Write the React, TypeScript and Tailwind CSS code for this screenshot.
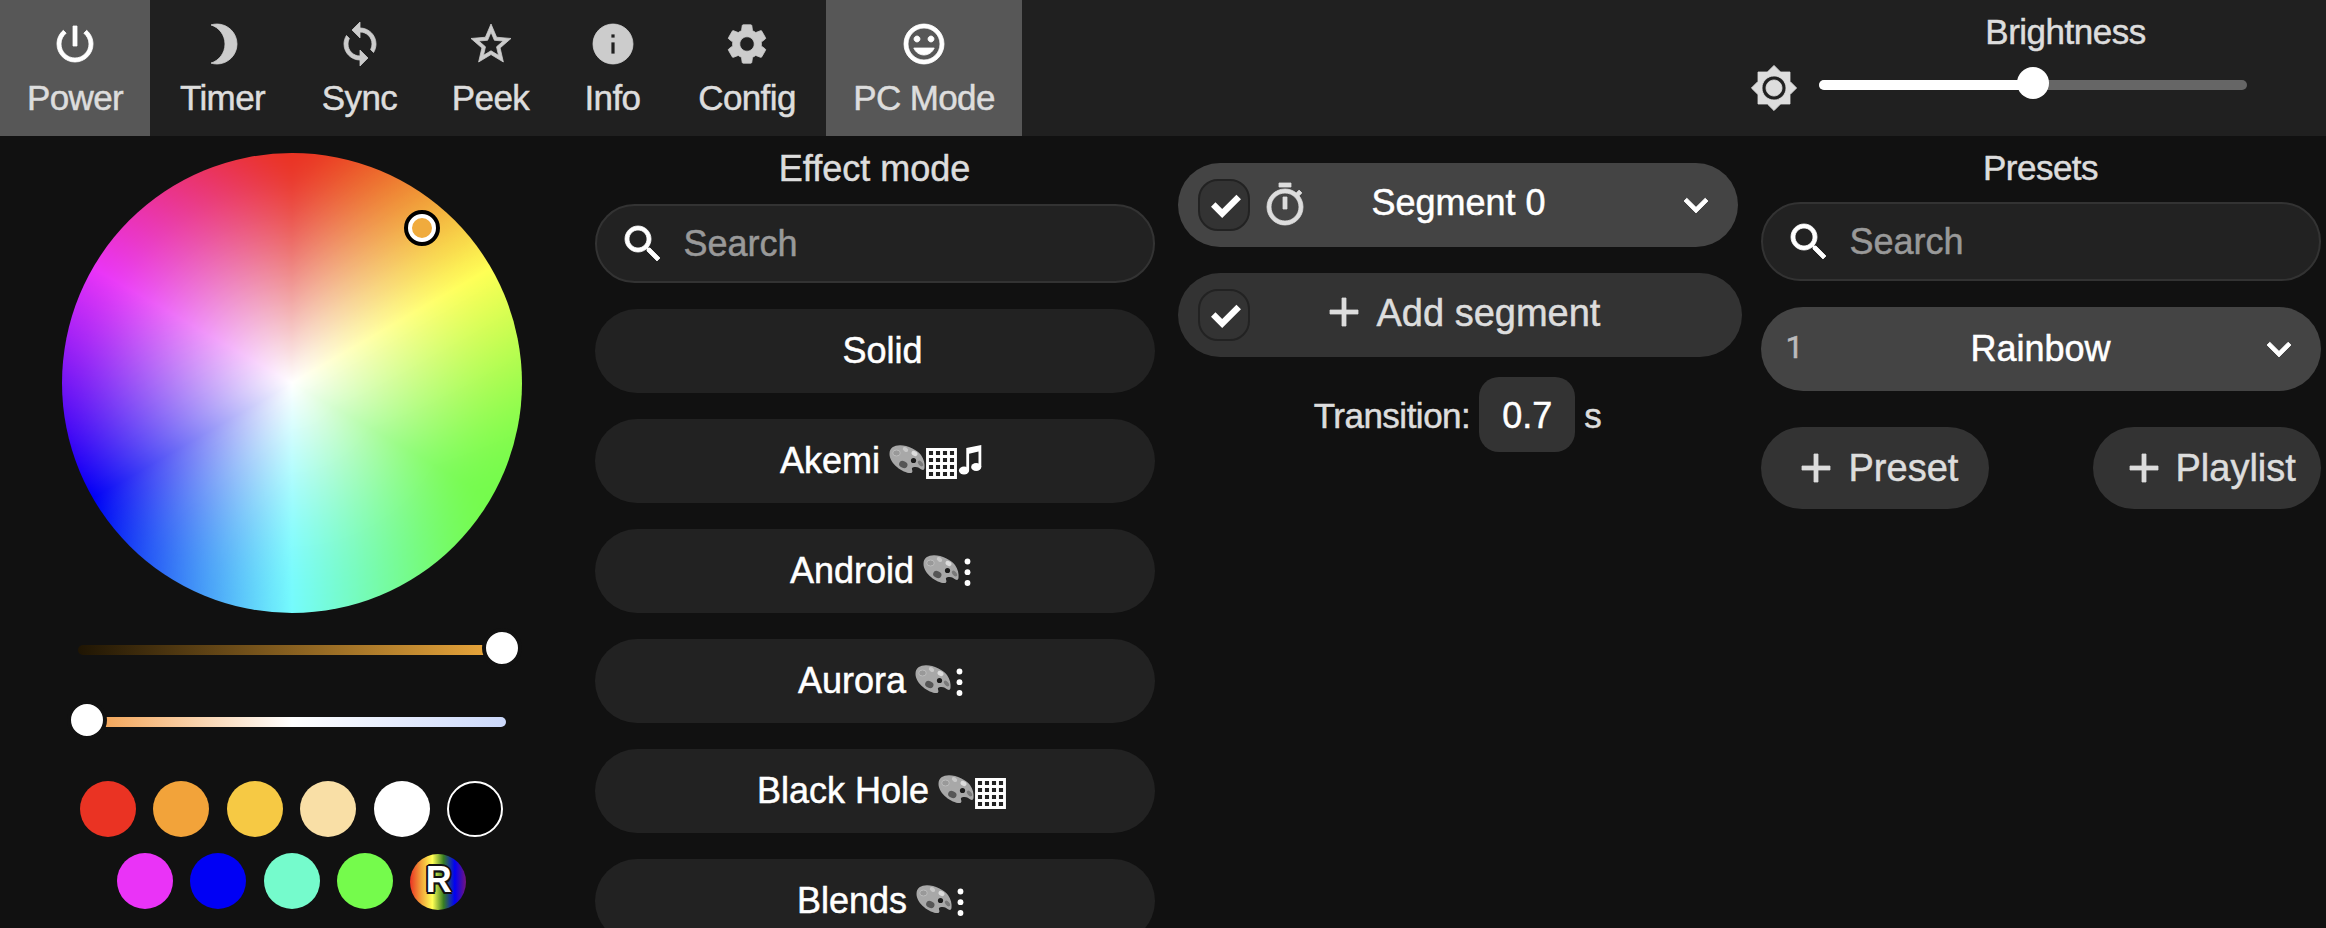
import React from "react";

const PATHS = {
  power:
    "M13 3h-2v10h2V3zm4.83 2.17l-1.42 1.42C17.99 7.86 19 9.81 19 12c0 3.87-3.13 7-7 7s-7-3.13-7-7c0-2.19 1.01-4.14 2.58-5.42L6.17 5.17C4.23 6.82 3 9.26 3 12c0 4.97 4.03 9 9 9s9-4.03 9-9c0-2.74-1.23-5.18-3.17-6.83z",
  moon: "M9 2c-1.05 0-2.05.16-3 .46 4.06 1.27 7 5.06 7 9.54 0 4.48-2.94 8.27-7 9.54.95.3 1.95.46 3 .46 5.52 0 10-4.48 10-10S14.52 2 9 2z",
  sync: "M12 4V1L8 5l4 4V6c3.31 0 6 2.69 6 6 0 1.01-.25 1.97-.7 2.8l1.46 1.46C19.54 15.03 20 13.57 20 12c0-4.42-3.58-8-8-8zm0 14c-3.31 0-6-2.69-6-6 0-1.01.25-1.97.7-2.8L5.24 7.74C4.46 8.97 4 10.43 4 12c0 4.42 3.58 8 8 8v3l4-4-4-4v3z",
  star: "M22 9.24l-7.19-.62L12 2 9.19 8.63 2 9.24l5.46 4.73L5.82 21 12 17.27 18.18 21l-1.63-7.03L22 9.24zM12 15.4l-3.76 2.27 1-4.28-3.32-2.88 4.38-.38L12 6.1l1.71 4.04 4.38.38-3.32 2.88 1 4.28L12 15.4z",
  info: "M12 2C6.48 2 2 6.48 2 12s4.48 10 10 10 10-4.48 10-10S17.52 2 12 2zm1 15h-2v-6h2v6zm0-8h-2V7h2v2z",
  cog: "M19.14 12.94c.04-.3.06-.61.06-.94 0-.32-.02-.64-.07-.94l2.03-1.58c.18-.14.23-.41.12-.61l-1.92-3.32c-.12-.22-.37-.29-.59-.22l-2.39.96c-.5-.38-1.03-.7-1.62-.94l-.36-2.54c-.04-.24-.24-.41-.48-.41h-3.84c-.24 0-.43.17-.47.41l-.36 2.54c-.59.24-1.13.57-1.62.94l-2.39-.96c-.22-.08-.47 0-.59.22L2.74 8.87c-.12.21-.08.47.12.61l2.03 1.58c-.05.3-.09.63-.09.94s.02.64.07.94l-2.03 1.58c-.18.14-.23.41-.12.61l1.92 3.32c.12.22.37.29.59.22l2.39-.96c.5.38 1.03.7 1.62.94l.36 2.54c.05.24.24.41.48.41h3.84c.24 0 .44-.17.47-.41l.36-2.54c.59-.24 1.13-.56 1.62-.94l2.39.96c.22.08.47 0 .59-.22l1.92-3.32c.12-.22.07-.47-.12-.61l-2.01-1.58zM12 15.6c-1.98 0-3.6-1.62-3.6-3.6s1.62-3.6 3.6-3.6 3.6 1.62 3.6 3.6-1.62 3.6-3.6 3.6z",
  smile:
    "M11.99 2C6.47 2 2 6.48 2 12s4.47 10 9.99 10C17.52 22 22 17.52 22 12S17.52 2 11.99 2zM12 20c-4.42 0-8-3.58-8-8s3.58-8 8-8 8 3.58 8 8-3.58 8-8 8zm3.5-9c.83 0 1.5-.67 1.5-1.5S16.33 8 15.5 8 14 8.67 14 9.5s.67 1.5 1.5 1.5zm-7 0c.83 0 1.5-.67 1.5-1.5S9.33 8 8.5 8 7 8.67 7 9.5 7.67 11 8.5 11zm3.5 6.5c2.33 0 4.31-1.46 5.11-3.5H6.89c.8 2.04 2.78 3.5 5.11 3.5z",
  sun: "M20 8.69V4h-4.69L12 .69 8.69 4H4v4.69L.69 12 4 15.31V20h4.69L12 23.31 15.31 20H20v-4.69L23.31 12 20 8.69zM12 18c-3.31 0-6-2.69-6-6s2.69-6 6-6 6 2.69 6 6-2.69 6-6 6zm0-10c-2.21 0-4 1.79-4 4s1.79 4 4 4 4-1.79 4-4-1.79-4-4-4z",
  search:
    "M15.5 14h-.79l-.28-.27C15.41 12.59 16 11.11 16 9.5 16 5.91 13.09 3 9.5 3S3 5.91 3 9.5 5.91 16 9.5 16c1.61 0 3.09-.59 4.23-1.57l.27.28v.79l5 4.99L20.49 19l-4.99-5zm-6 0C7.01 14 5 11.99 5 9.5S7.01 5 9.5 5 14 7.01 14 9.5 11.99 14 9.5 14z",
  timer:
    "M15 1H9v2h6V1zm-4 13h2V8h-2v6zm8.03-6.61l1.42-1.42c-.43-.51-.9-.99-1.41-1.41l-1.42 1.42C16.07 4.74 14.12 4 12 4c-4.97 0-9 4.03-9 9s4.02 9 9 9 9-4.03 9-9c0-2.12-.74-4.07-1.97-5.61zM12 20c-3.87 0-7-3.13-7-7s3.13-7 7-7 7 3.13 7 7-3.13 7-7 7z",
  chevron: "M16.59 8.59L12 13.17 7.41 8.59 6 10l6 6 6-6z",
  plus: "M19 13h-6v6h-2v-6H5v-2h6V5h2v6h6v2z",
};

type IconName = keyof typeof PATHS;

function Icon({ name, className = "" }: { name: IconName; className?: string }) {
  return (
    <svg
      viewBox="0 0 24 24"
      className={`size-12 shrink-0 overflow-visible fill-current stroke-current ${className}`}
      strokeWidth={0.4}
    >
      <path d={PATHS[name]} />
    </svg>
  );
}

const TABS: { label: string; icon: IconName; width: string; active?: boolean }[] = [
  { label: "Power", icon: "power", width: "w-[150px]", active: true },
  { label: "Timer", icon: "moon", width: "w-[145px]" },
  { label: "Sync", icon: "sync", width: "w-[129px]" },
  { label: "Peek", icon: "star", width: "w-[133px]" },
  { label: "Info", icon: "info", width: "w-[111px]" },
  { label: "Config", icon: "cog", width: "w-[158px]" },
  { label: "PC Mode", icon: "smile", width: "w-[196px]", active: true },
];

function Header() {
  return (
    <header className="flex h-[136px] items-start bg-[#202020] text-[35px] tracking-[-0.5px] text-[#ddd]">
      <nav className="flex">
        {TABS.map((t) => (
          <button
            key={t.label}
            className={`flex h-[136px] flex-col items-center pt-5 ${t.width} ${t.active ? "bg-[#575757]" : ""}`}
          >
            <Icon name={t.icon} className={t.active ? "text-white" : "text-[#ccc]"} />
            <span className="mt-[10px] leading-10 tracking-[-0.6px] whitespace-nowrap">{t.label}</span>
          </button>
        ))}
      </nav>
      <div className="ml-[728px] flex pt-3">
        <Icon name="sun" className="mt-[52px]" />
        <div className="ml-[21px] w-[428px]">
          <p className="pl-[65px] text-center leading-10">Brightness</p>
          <div className="relative mt-7 h-[10px] rounded-full bg-[#666]">
            <div className="h-full w-1/2 rounded-full bg-white" />
            <div className="absolute top-[-13px] left-[198px] size-8 rounded-full bg-white" />
          </div>
        </div>
      </div>
    </header>
  );
}

const SWATCHES = [
  ["bg-[#ea3323]", "bg-[#f2a33a]", "bg-[#f6c944]", "bg-[#f9dfa6]", "bg-white", "bg-black border-2 border-white"],
  ["bg-[#ea33f7]", "bg-[#0000f5]", "bg-[#75fbcc]", "bg-[#75fb4c]"],
];

function ColorColumn() {
  return (
    <section className="flex flex-col items-center pt-[17px]">
      {/* Softens the pure hues of the wheel as a wide-gamut display does */}
      <svg className="absolute size-0" aria-hidden="true">
        <filter id="gamut" colorInterpolationFilters="linearRGB" x="0" y="0" width="1" height="1">
          <feColorMatrix
            type="matrix"
            values="0.8225 0.1775 0 0 0  0.0332 0.9668 0 0 0  0.0171 0.0724 0.9105 0 0  0 0 0 1 0"
          />
        </filter>
      </svg>
      <div className="relative size-[460px]">
        <div className="size-full rounded-full bg-[radial-gradient(closest-side,#fff,rgba(255,255,255,0)),conic-gradient(#f00,#ff0,#0f0,#0ff,#00f,#f0f,#f00)] [filter:url(#gamut)]" />
        <div className="absolute top-[57px] left-[342px] size-9 rounded-full border-4 border-black bg-black">
          <div className="size-full rounded-full border-4 border-white bg-[#f0ab3d]" />
        </div>
      </div>
      <div className="relative mt-8 h-[10px] w-[428px] rounded-full bg-[linear-gradient(90deg,#1f1503,#f0ab3d)]">
        <div className="absolute top-[-17px] left-[404px] size-10 rounded-full border-4 border-[#111] bg-white" />
      </div>
      <div className="relative mt-[62px] h-[10px] w-[428px] rounded-full bg-[linear-gradient(90deg,#f29b45,#fff,#ccd9fb)]">
        <div className="absolute top-[-17px] left-[-11px] size-10 rounded-full border-4 border-[#111] bg-white" />
      </div>
      <div className="mt-[54px] flex gap-[17.4px]">
        {SWATCHES[0].map((c) => (
          <div key={c} className={`size-14 rounded-full ${c}`} />
        ))}
      </div>
      <div className="mt-4 flex gap-[17.4px]">
        {SWATCHES[1].map((c) => (
          <div key={c} className={`size-14 rounded-full ${c}`} />
        ))}
        <div className="mt-px flex size-14 items-center justify-center rounded-full bg-[linear-gradient(90deg,#ea3323,#f2a33a,#ffff54,#377e22,#0000f5,#75147c)] text-[36px] leading-none font-bold text-white [-webkit-text-stroke:0] [text-shadow:-1.5px_-1.5px_0_#111,1.5px_-1.5px_0_#111,-1.5px_1.5px_0_#111,1.5px_1.5px_0_#111,0_2px_0_#111,0_-2px_0_#111,2px_0_0_#111,-2px_0_0_#111]">
          <span className="-mt-1 ml-px">R</span>
        </div>
      </div>
    </section>
  );
}

function Palette() {
  return (
    <svg viewBox="0 0 36 30" className="mt-px h-[30px] w-9 shrink-0">
      <path
        d="M.5 9C.5 3 5 .3 11 .3c8 0 17 4.700 21 9.700 3 4 4 9 3.500 13-.3 2-1.500 2.500-3 1.500-2-1.500-4-3-7-2.500-2 .3-3 1-2.500 2.500.4 1.500 1 2-.5 3.500C15 29 .5 19 .5 9z"
        fill="#a8a8a8"
      />
      <ellipse cx="7.500" cy="8" rx="3.800" ry="3" fill="#999" stroke="#bcbcbc" strokeWidth="1" />
      <ellipse cx="16.500" cy="4.500" rx="3" ry="2" fill="#c8c8c8" transform="rotate(35 16.500 4.500)" />
      <ellipse cx="25.500" cy="8.500" rx="3.200" ry="2.200" fill="#dcdcdc" transform="rotate(30 25.500 8.500)" />
      <ellipse cx="14.300" cy="19.500" rx="4.300" ry="3.300" fill="#565656" transform="rotate(25 14.300 19.500)" />
      <ellipse cx="31.500" cy="18.500" rx="3.400" ry="1.900" fill="#7a7a7a" transform="rotate(50 31.500 18.500)" />
      <circle cx="24.500" cy="15.500" r="2.600" fill="#1a1a1a" />
    </svg>
  );
}

function Matrix() {
  return (
    <svg viewBox="0 0 31 31" className="mt-1 ml-px h-[31px] w-[31px] shrink-0 stroke-white" strokeWidth="2.900" fill="none">
      <path d="M1.500 1.500h28v28h-28zM8.500 1.500v28M15.500 1.500v28M22.500 1.500v28M1.500 8.500h28M1.500 15.500h28M1.500 22.500h28" />
    </svg>
  );
}

function Note() {
  return (
    <svg viewBox="0 0 26 30" className="mt-px h-[30px] w-[26px] shrink-0 overflow-visible fill-white">
      <path d="M9.300 3L24.300 0v22h-2.800V6.500l-9.400 2.300V25H9.300z" />
      <ellipse cx="7" cy="25.500" rx="5.100" ry="4" />
      <ellipse cx="19.200" cy="22" rx="5.100" ry="4" />
    </svg>
  );
}

function Dots() {
  return (
    <svg viewBox="0 0 14 30" className="mt-[3px] h-[30px] w-[14px] shrink-0 fill-white">
      <circle cx="8.500" cy="4.500" r="2.900" />
      <circle cx="8.500" cy="15.200" r="2.900" />
      <circle cx="8.500" cy="26" r="2.900" />
    </svg>
  );
}

const EFFECTS: { name: string; marks: React.ReactNode[] }[] = [
  { name: "Solid", marks: [] },
  { name: "Akemi", marks: [<Palette />, <Matrix />, <Note />] },
  { name: "Android", marks: [<Palette />, <Dots />] },
  { name: "Aurora", marks: [<Palette />, <Dots />] },
  { name: "Black Hole", marks: [<Palette />, <Matrix />] },
  { name: "Blends", marks: [<Palette />, <Dots />] },
];

function SearchBox() {
  return (
    <div className="flex h-[79px] w-[560px] items-center rounded-full border-2 border-[#333] bg-[#222] pl-[22px] text-white">
      <Icon name="search" />
      <span className="ml-[17px] text-[36px] leading-none text-[#999]">Search</span>
    </div>
  );
}

function EffectColumn() {
  return (
    <section className="flex flex-col items-center pt-[13px] text-white">
      <h2 className="text-[36px] leading-10 text-[#ddd]">Effect mode</h2>
      <div className="mt-[15px]">
        <SearchBox />
      </div>
      <ul className="mt-[26px] flex flex-col gap-[26px]">
        {EFFECTS.map((e) => (
          <li
            key={e.name}
            className={`flex h-[84px] w-[560px] items-center justify-center rounded-full bg-[#222] text-[36px] ${e.marks.length > 0 ? "pl-[14px]" : "pl-4"}`}
          >
            <span className="leading-10">{e.name}</span>
            {e.marks.length > 0 && (
              <span className="ml-[9px] flex h-[34px] items-start">
                {e.marks.map((m, i) => (
                  <React.Fragment key={i}>{m}</React.Fragment>
                ))}
              </span>
            )}
          </li>
        ))}
      </ul>
    </section>
  );
}

function Check() {
  return (
    <div className="flex size-[52px] shrink-0 items-center justify-center rounded-[20px] border-2 border-[#222] bg-[#333]">
      <svg viewBox="0 0 30 24" className="mt-[2px] ml-1 h-6 w-[30px] fill-none stroke-white" strokeWidth="6.400">
        <path d="M2.200 10.500l9 9L27.700 3" />
      </svg>
    </div>
  );
}

function SegmentColumn() {
  return (
    <section className="flex flex-col items-center pt-[27px] text-white">
      <div className="grid h-[84px] w-[560px] grid-cols-[130px_1fr_130px] items-center rounded-full bg-[#444] pr-[18px] pl-5">
        <div className="flex items-center">
          <Check />
          <Icon name="timer" className="ml-[11px] text-[#ddd]" />
        </div>
        <span className="mb-1 text-center text-[36px] leading-10 whitespace-nowrap">Segment 0</span>
        <Icon name="chevron" className="justify-self-end" />
      </div>
      <div className="mt-[26px] ml-1 flex h-[84px] w-[564px] items-center rounded-full bg-[#333] pl-5 text-[#ddd]">
        <Check />
        <Icon name="plus" className="mb-[7px] ml-[70px]" />
        <span className="mb-1 ml-[9px] text-[38px] leading-10">Add segment</span>
      </div>
      <div className="mt-5 flex items-center text-[35px] tracking-[-0.5px] text-[#ddd]">
        <span className="mt-1">Transition:</span>
        <span className="mr-[9px] ml-[9px] flex h-[75px] w-24 items-center justify-center rounded-[20px] bg-[#333] pt-[2px] text-[36px] tracking-normal text-white">
          0.7
        </span>
        <span className="mt-1">s</span>
      </div>
    </section>
  );
}

function PresetColumn() {
  return (
    <section className="flex flex-col items-center pt-[12px] text-white">
      <h2 className="text-[35px] leading-10 tracking-[-0.5px] text-[#ddd]">Presets</h2>
      <div className="mt-[14px]">
        <SearchBox />
      </div>
      <div className="mt-[26px] grid h-[84px] w-[560px] grid-cols-[100px_1fr_100px] items-center rounded-full bg-[#444] pr-[18px] pl-[18px]">
        <span className="mb-1 pl-[7px] font-[Roboto,sans-serif] text-[32px] leading-10 text-[#bbb]">1</span>
        <span className="text-center text-[36px] leading-10">Rainbow</span>
        <Icon name="chevron" className="justify-self-end" />
      </div>
      <div className="mt-9 flex w-[560px] justify-between text-[38px] text-[#ddd]">
        <button className="flex h-[82px] w-[228px] items-center rounded-full bg-[#333] pl-[31px]">
          <Icon name="plus" />
          <span className="ml-[9px]">Preset</span>
        </button>
        <button className="flex h-[82px] w-[228px] items-center rounded-full bg-[#333] pl-[27px]">
          <Icon name="plus" />
          <span className="ml-2">Playlist</span>
        </button>
      </div>
    </section>
  );
}

export default function App() {
  return (
    <div className="h-[928px] w-[2326px] overflow-hidden bg-[#111] font-['Liberation_Sans',Arial,sans-serif] [-webkit-text-stroke:0.5px]">
      <Header />
      <main className="grid grid-cols-[583px_583px_583px_583px]">
        <ColorColumn />
        <EffectColumn />
        <SegmentColumn />
        <PresetColumn />
      </main>
    </div>
  );
}
